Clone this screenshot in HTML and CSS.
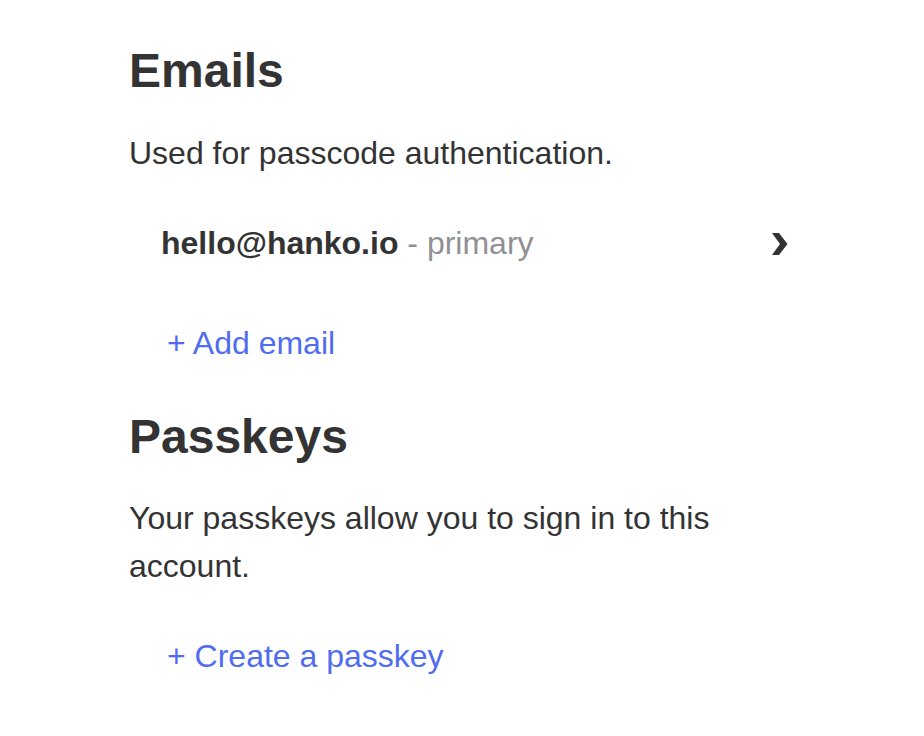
FILE: index.html
```html
<!DOCTYPE html>
<html lang="en">
<head>
<meta charset="utf-8">
<title>Profile</title>
<link rel="stylesheet" href="styles.css">
</head>
<body>
<div class="profile">
  <section class="section">
    <h2 class="heading">Emails</h2>
    <p class="desc">Used for passcode authentication.</p>
    <div class="item">
      <span class="item-label"><b class="email">hello@hanko.io</b><span class="muted"> - primary</span></span>
      <svg class="chevron" width="16" height="22" viewBox="0 0 16 22" aria-hidden="true"><polygon points="0,0 7,0 15.5,11 7,22 0,22 8,11" fill="#333333"/></svg>
    </div>
    <button class="link">+ Add email</button>
  </section>
  <section class="section">
    <h2 class="heading">Passkeys</h2>
    <p class="desc">Your passkeys allow you to sign in to this account.</p>
    <button class="link">+ Create a passkey</button>
  </section>
</div>
</body>
</html>
```

FILE: styles.css
```css
html, body {
  margin: 0;
  padding: 0;
  background: #ffffff;
}
body {
  font-family: "Liberation Sans", Arial, Helvetica, sans-serif;
  color: #333333;
}
.profile {
  width: 676px;
  padding: 43px 0 0 129px;
}
.section {
  display: flex;
  flex-direction: column;
  align-items: flex-start;
}
.heading {
  margin: 0;
  font-size: 48px;
  line-height: 56px;
  font-weight: 700;
  color: #333333;
}
.desc {
  margin: 30px 0 0;
  font-size: 32px;
  line-height: 48px;
  color: #333333;
}
.item {
  align-self: stretch;
  display: flex;
  align-items: center;
  justify-content: space-between;
  margin-top: 26px;
  padding: 16px 17px 16px 32px;
  font-size: 32px;
  line-height: 48px;
}
.email {
  font-weight: 700;
  color: #333333;
}
.muted {
  color: #8f9095;
}
.chevron {
  display: block;
  margin-top: 1px;
}
.link {
  margin: 36px 0 42px 38px;
  padding: 0;
  border: 0;
  background: none;
  font-family: inherit;
  font-size: 32px;
  line-height: 48px;
  color: #506cf0;
  cursor: pointer;
}
.section + .section .desc {
  margin-top: 29px;
}
.section + .section .link {
  margin-top: 42px;
}
```
